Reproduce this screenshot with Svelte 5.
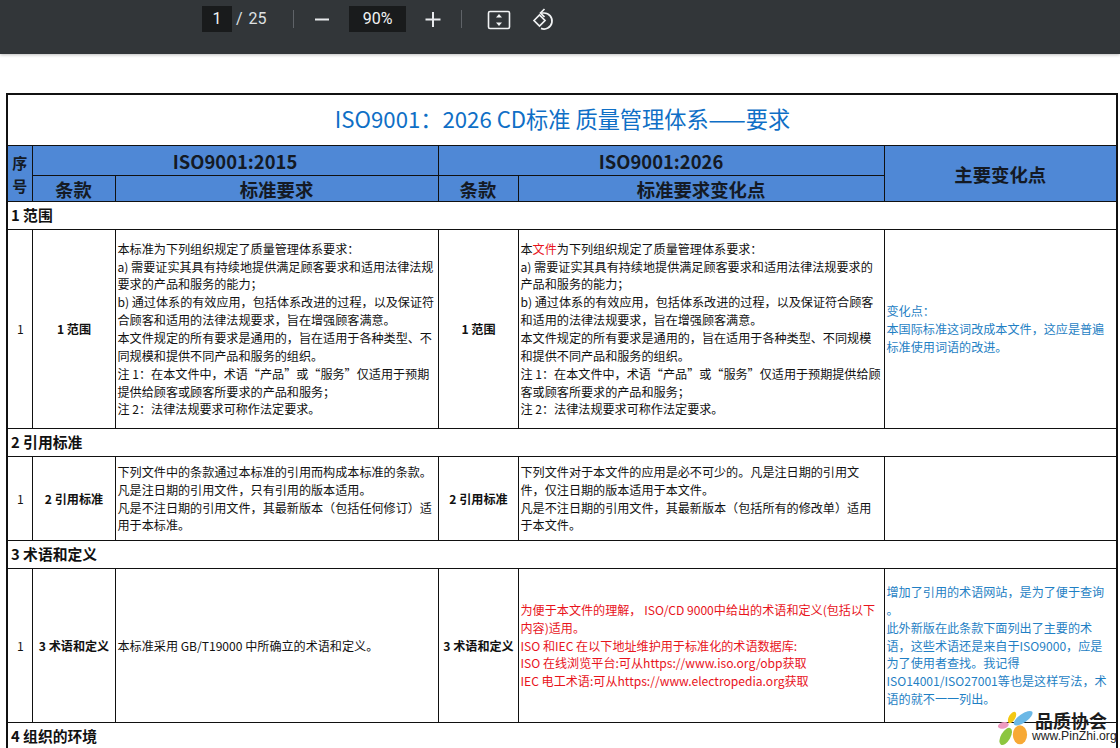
<script>
  const zh = 'ISO9001：2026 CD标准 质量管理体系——要求';
</script>

<svelte:head><title>ISO9001</title></svelte:head>

<div class="page">
  <header class="toolbar">
    <span class="pagebox">1</span>
    <span class="total">/&nbsp; 25</span>
    <span class="sep"></span>
    <svg class="btn" width="18" height="18" viewBox="0 0 18 18"><path d="M2 9.5h14" stroke="#e8eaed" stroke-width="2"/></svg>
    <span class="zoombox">90%</span>
    <svg class="btn plus" width="18" height="18" viewBox="0 0 18 18"><path d="M1.5 9.5h15M9 2v15" stroke="#e8eaed" stroke-width="2"/></svg>
    <span class="sep second"></span>
    <svg class="fit" width="24" height="20" viewBox="0 0 24 20" fill="none">
      <rect x="1.5" y="1.5" width="21" height="17" rx="1.5" stroke="#f1f3f4" stroke-width="1.6"/>
      <path d="M12 4l3 3.4H9zM12 16l3-3.4H9z" fill="#f1f3f4"/>
    </svg>
    <svg class="rotate" width="24" height="24" viewBox="0 0 24 24" fill="none" stroke="#f1f3f4" stroke-width="1.7">
      <path d="M2 12.5l5.5-5.5 5.5 5.5-5.5 5.5z"/>
      <path d="M8.5 5h3.5a8 8 0 1 1-3 15.4"/>
      <path d="M12.5 1L8.5 5l4 4"/>
    </svg>
  </header>

  <main class="sheet">
    <table>
      <colgroup>
        <col style="width:25px" /><col style="width:83px" /><col style="width:323px" />
        <col style="width:80px" /><col style="width:366px" /><col style="width:233px" />
      </colgroup>
      <tbody>
        <tr class="r-title"><td colspan="6" class="title">{zh}</td></tr>
        <tr class="r-h1">
          <th rowspan="2" class="seq">序<br />号</th>
          <th colspan="2">ISO9001:2015</th>
          <th colspan="2">ISO9001:2026</th>
          <th rowspan="2">主要变化点</th>
        </tr>
        <tr class="r-h2">
          <th>条款</th><th>标准要求</th><th>条款</th><th>标准要求变化点</th>
        </tr>

        <tr class="r-sec"><td colspan="6" class="sec">1 范围</td></tr>
        <tr class="r1">
          <td class="c">1</td>
          <td class="c b">1 范围</td>
          <td>本标准为下列组织规定了质量管理体系要求：<br />a) 需要证实其具有持续地提供满足顾客要求和适用法律法规<br />要求的产品和服务的能力；<br />b) 通过体系的有效应用，包括体系改进的过程，以及保证符<br />合顾客和适用的法律法规要求，旨在增强顾客满意。<br />本文件规定的所有要求是通用的，旨在适用于各种类型、不<br />同规模和提供不同产品和服务的组织。<br />注 1：在本文件中，术语“产品”或“服务”仅适用于预期<br />提供给顾客或顾客所要求的产品和服务；<br />注 2：法律法规要求可称作法定要求。</td>
          <td class="c b">1 范围</td>
          <td>本<span class="red">文件</span>为下列组织规定了质量管理体系要求：<br />a) 需要证实其具有持续地提供满足顾客要求和适用法律法规要求的<br />产品和服务的能力；<br />b) 通过体系的有效应用，包括体系改进的过程，以及保证符合顾客<br />和适用的法律法规要求，旨在增强顾客满意。<br />本文件规定的所有要求是通用的，旨在适用于各种类型、不同规模<br />和提供不同产品和服务的组织。<br />注 1：在本文件中，术语“产品”或“服务”仅适用于预期提供给顾<br />客或顾客所要求的产品和服务；<br />注 2：法律法规要求可称作法定要求。</td>
          <td class="note">变化点：<br />本国际标准这词改成本文件，这应是普遍<br />标准使用词语的改进。</td>
        </tr>

        <tr class="r-sec"><td colspan="6" class="sec">2 引用标准</td></tr>
        <tr class="r2">
          <td class="c">1</td>
          <td class="c b">2 引用标准</td>
          <td>下列文件中的条款通过本标准的引用而构成本标准的条款。<br />凡是注日期的引用文件，只有引用的版本适用。<br />凡是不注日期的引用文件，其最新版本（包括任何修订）适<br />用于本标准。</td>
          <td class="c b">2 引用标准</td>
          <td>下列文件对于本文件的应用是必不可少的。凡是注日期的引用文<br />件，仅注日期的版本适用于本文件。<br />凡是不注日期的引用文件，其最新版本（包括所有的修改单）适用<br />于本文件。</td>
          <td></td>
        </tr>

        <tr class="r-sec"><td colspan="6" class="sec">3 术语和定义</td></tr>
        <tr class="r3">
          <td class="c">1</td>
          <td class="c b">3 术语和定义</td>
          <td>本标准采用 GB/T19000 中所确立的术语和定义。</td>
          <td class="c b">3 术语和定义</td>
          <td class="red">为便于本文件的理解， ISO/CD 9000中给出的术语和定义(包括以下<br />内容)适用。<br />ISO 和IEC 在以下地址维护用于标准化的术语数据库:<br />ISO 在线浏览平台:可从https://www.iso.org/obp获取<br />IEC 电工术语:可从https://www.electropedia.org获取</td>
          <td class="note">增加了引用的术语网站，是为了便于查询<br />。<br />此外新版在此条款下面列出了主要的术<br />语，这些术语还是来自于ISO9000，应是<br />为了使用者查找。我记得<br />ISO14001/ISO27001等也是这样写法，术<br />语的就不一一列出。</td>
        </tr>

        <tr class="r-sec"><td colspan="6" class="sec">4 组织的环境</td></tr>
      </tbody>
    </table>
  </main>

  <div class="mark">
    <svg width="38" height="37" viewBox="0 0 48 46">
      <ellipse cx="33" cy="10" rx="14" ry="5.5" transform="rotate(-35 33 10)" fill="#6bb8e6"/>
      <ellipse cx="19" cy="9" rx="4" ry="8" transform="rotate(30 19 9)" fill="#f3c814"/>
      <ellipse cx="8" cy="19" rx="7" ry="4" transform="rotate(-15 8 19)" fill="#ee9ac0"/>
      <ellipse cx="11" cy="33" rx="6" ry="12" transform="rotate(30 11 33)" fill="#8cc63f"/>
      <ellipse cx="29" cy="31" rx="9" ry="12" fill="#f7a935"/>
    </svg>
    <div class="mark-text">
      <span class="mark-cn">品质协会</span>
      <span class="mark-url">www.PinZhi.org</span>
    </div>
  </div>
</div>

<style>
  :global(body) {
    margin: 0;
    overflow: hidden;
    background: #fff;
  }
  .page {
    position: relative;
    width: 1120px;
    height: 748px;
    overflow: hidden;
    font-family: "Noto Sans CJK SC", "Noto Sans", sans-serif;
  }
  .toolbar {
    height: 54px;
    background: #323639;
    box-shadow: 0 1px 3px rgba(0, 0, 0, 0.25);
    display: flex;
    align-items: flex-start;
    color: #f1f3f4;
    font-family: Roboto, "Noto Sans", sans-serif;
    font-size: 16px;
    box-sizing: border-box;
    padding: 6px 0 0 202px;
  }
  .pagebox {
    width: 30px;
    height: 26px;
    background: #191b1c;
    text-align: center;
    line-height: 25px;
  }
  .total {
    margin-left: 4px;
    line-height: 26px;
    width: 37px;
    white-space: nowrap;
    color: #dfe1e3;
    word-spacing: -1px;
  }
  .sep {
    width: 1px;
    height: 18px;
    margin: 4px 0 0 20px;
    background: #5f6368;
  }
  .sep.second {
    margin-left: 19px;
  }
  .btn {
    margin: 4px 0 0 19px;
  }
  .zoombox {
    width: 57px;
    height: 26px;
    margin-left: 18px;
    background: #191b1c;
    text-align: center;
    line-height: 25px;
  }
  .btn.plus {
    margin-left: 18px;
  }
  .fit {
    margin: 4px 0 0 25px;
  }
  .rotate {
    margin: 2px 0 0 21px;
  }
  .sheet {
    padding: 39px 0 0 6px;
  }
  table {
    table-layout: fixed;
    width: 1110px;
    border-collapse: collapse;
    font-size: 12.1px;
    line-height: 17.85px;
    color: #111;
    border: 2px solid #111;
  }
  td,
  th {
    border: 1px solid #111;
    padding: 0 1px 0 2px;
    vertical-align: middle;
    overflow: hidden;
    white-space: nowrap;
  }
  th {
    background: #4f88d6;
    font-size: 18.4px;
    font-weight: 700;
    line-height: 20px;
    color: #141a24;
    padding: 0;
  }
  th.seq {
    font-size: 15px;
    line-height: 23px;
  }
  .title {
    height: 48px;
    padding-bottom: 2px;
    text-align: center;
    color: #0f6fc6;
    font-size: 22.2px;
  }
  .r-h1 th {
    height: 29px;
  }
  .r-h2 th {
    height: 25px;
  }
  .sec {
    height: 26px;
    padding-bottom: 1px;
    font-size: 14.8px;
    font-weight: 700;
    padding-left: 3px;
  }
  .r1 td {
    height: 198px;
  }
  .r2 td {
    height: 83px;
  }
  .r3 td {
    height: 153px;
  }
  .c {
    text-align: center;
  }
  .b {
    font-weight: 700;
  }
  .red {
    color: #e8141c;
  }
  .note {
    color: #1f7fc4;
  }
  .mark {
    position: absolute;
    right: 4px;
    bottom: 1px;
    display: flex;
    align-items: flex-end;
    width: 119px;
    height: 38px;
  }
  .mark svg {
    flex: none;
  }
  .mark-text {
    display: flex;
    flex-direction: column;
    align-items: flex-start;
    margin: 0 0 4px -3px;
    width: 84px;
  }
  .mark-cn {
    font-size: 18px;
    line-height: 19px;
    font-weight: 700;
    color: #1c1c1c;
    margin-left: 3px;
    white-space: nowrap;
  }
  .mark-url {
    font-family: "Liberation Sans", sans-serif;
    font-size: 12.2px;
    line-height: 13px;
    color: #222;
    white-space: nowrap;
  }
</style>
